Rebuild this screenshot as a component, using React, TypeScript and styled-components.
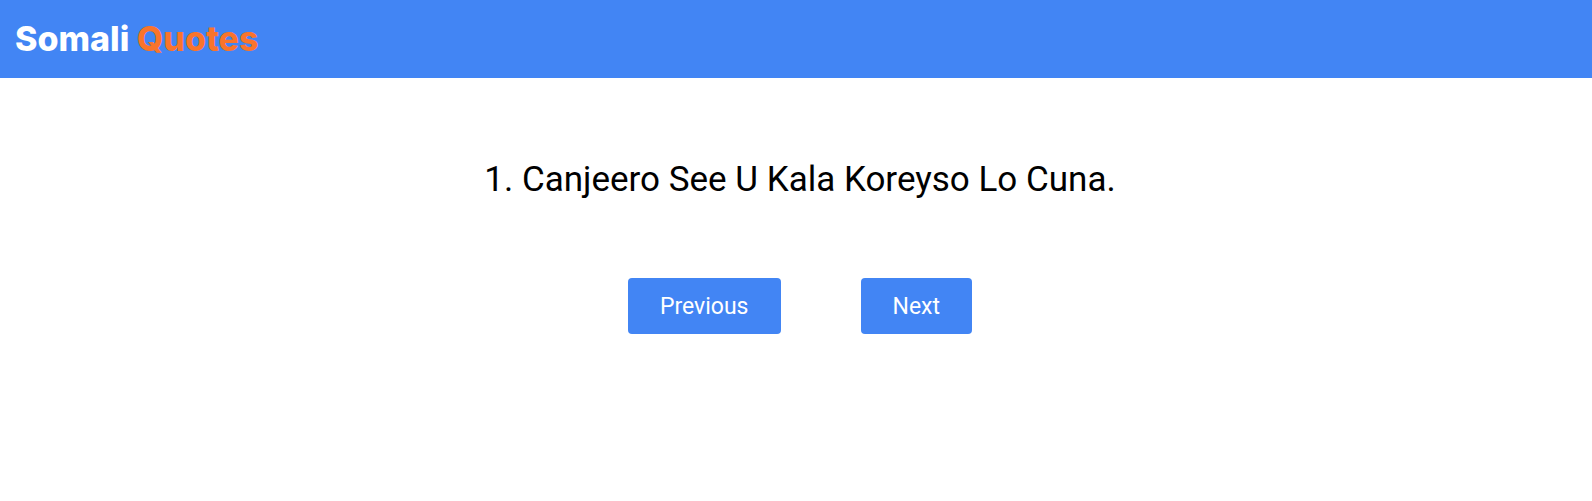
import React, { useState } from "react";
import styled, { createGlobalStyle } from "styled-components";

const GlobalStyle = createGlobalStyle`
  *, *::before, *::after { box-sizing: border-box; }
  body { margin: 0; background: #ffffff; color: #000000; font-family: Roboto, "Liberation Sans", sans-serif; }
`;

const Header = styled.header`
  padding: 16px 15px;
  background: #4285f4;
`;

const Brand = styled.h1`
  margin: 0;
  color: #ffffff;
  font-family: Inter, "Liberation Sans", sans-serif;
  font-size: 34px;
  line-height: 46px;
  font-weight: 800;
`;

const Accent = styled.span`
  color: #f9742c;
`;

const Main = styled.main`
  display: flex;
  flex-direction: column;
  align-items: center;
  gap: 72px;
  padding: 76px 16px 80px 24px;
`;

const Quote = styled.p`
  margin: 0;
  font-size: 35px;
  line-height: 52px;
  text-align: center;
`;

const Controls = styled.div`
  display: flex;
  gap: 80px;
`;

const Button = styled.button`
  height: 56px;
  padding: 2px 32px 0;
  border: 0;
  border-radius: 4px;
  background: #4285f4;
  color: #ffffff;
  font-family: inherit;
  font-size: 23px;
  line-height: 32px;
  cursor: pointer;
`;

const quotes = ["Canjeero See U Kala Koreyso Lo Cuna."];

export default function App() {
  const [index, setIndex] = useState(0);
  const step = (by: number) => setIndex((i) => (i + by + quotes.length) % quotes.length);

  return (
    <>
      <GlobalStyle />
      <Header>
        <Brand>Somali <Accent>Quotes</Accent></Brand>
      </Header>
      <Main>
        <Quote>{index + 1}. {quotes[index]}</Quote>
        <Controls>
          <Button type="button" onClick={() => step(-1)}>Previous</Button>
          <Button type="button" onClick={() => step(1)}>Next</Button>
        </Controls>
      </Main>
    </>
  );
}
